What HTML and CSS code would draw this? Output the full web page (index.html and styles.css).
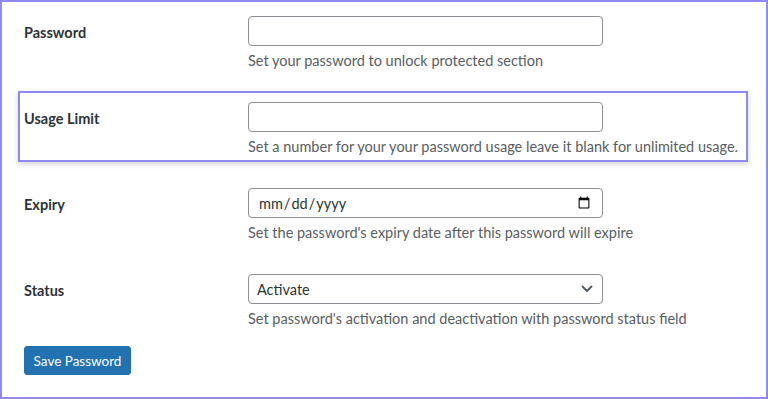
FILE: index.html
```html
<!DOCTYPE html>
<html>
<head>
<meta charset="utf-8">
<link rel="stylesheet" href="styles.css">
</head>
<body>
<div class="frame">
  <form class="form">
    <div class="row">
      <label class="label">Password</label>
      <div class="field">
        <input class="input" type="text">
        <p class="desc">Set your password to unlock protected section</p>
      </div>
    </div>
    <div class="row highlight">
      <label class="label">Usage Limit</label>
      <div class="field">
        <input class="input" type="text">
        <p class="desc">Set a number for your your password usage leave it blank for unlimited usage.</p>
      </div>
    </div>
    <div class="row">
      <label class="label">Expiry</label>
      <div class="field">
        <input class="input date" type="date">
        <p class="desc">Set the password's expiry date after this password will expire</p>
      </div>
    </div>
    <div class="row">
      <label class="label">Status</label>
      <div class="field">
        <div class="select-wrap">
          <select class="input select">
            <option>Activate</option>
            <option>Deactivate</option>
          </select>
          <svg class="chevron" width="12" height="8" viewBox="0 0 12 8"><path d="M1.5 1.5 L6 6 L10.5 1.5" fill="none" stroke="#50575e" stroke-width="1.8" stroke-linecap="round" stroke-linejoin="round"/></svg>
        </div>
        <p class="desc">Set password's activation and deactivation with password status field</p>
      </div>
    </div>
    <button class="button" type="button">Save Password</button>
  </form>
</div>
</body>
</html>
```
FILE: styles.css
```css
* { box-sizing: border-box; }
html, body { margin: 0; padding: 0; background: #fff; }
body { font-family: Lato, "Liberation Sans", sans-serif; color: #1d2327; }
.frame {
  width: 768px;
  height: 399px;
  border: 2px solid #9189f2;
  overflow: hidden;
  background: #fff;
}
.form {
  padding: 14px 0 0 22px;
  margin: 0;
}
.row {
  position: relative;
  display: flex;
  margin-bottom: 31px;
}
.label {
  width: 224px;
  flex: none;
  padding-top: 2px;
  font-size: 14.5px;
  font-weight: 700;
  line-height: 30px;
  color: #2c3338;
}
.field { display: flex; flex-direction: column; }
.input {
  width: 355px;
  height: 30px;
  margin: 0;
  border: 1px solid #8c8f94;
  border-radius: 4px;
  padding: 0 9px;
  font-family: Lato, "Liberation Sans", sans-serif;
  font-size: 14.5px;
  color: #2c3338;
  background: #fff;
}
.desc {
  margin: 5px 0 0 0;
  font-size: 14.5px;
  line-height: 20px;
  color: #585d63;
}
.select-wrap { position: relative; width: 355px; }
.select { appearance: none; -webkit-appearance: none; padding-left: 8px; }
.chevron { position: absolute; right: 10px; top: 11px; }
.highlight::before {
  content: "";
  position: absolute;
  left: -6px;
  right: 18px;
  top: -11px;
  bottom: -5px;
  border: 2px solid #9189f2;
  box-shadow: 0 2px 6px rgba(0,0,0,0.18);
  pointer-events: none;
}
.button {
  display: block;
  margin-top: -14px;
  width: 107px;
  height: 29px;
  padding: 0;
  border: 1px solid #2271b1;
  border-radius: 3px;
  background: #2271b1;
  color: #fff;
  font-family: Lato, "Liberation Sans", sans-serif;
  font-size: 13.5px;
}
```
